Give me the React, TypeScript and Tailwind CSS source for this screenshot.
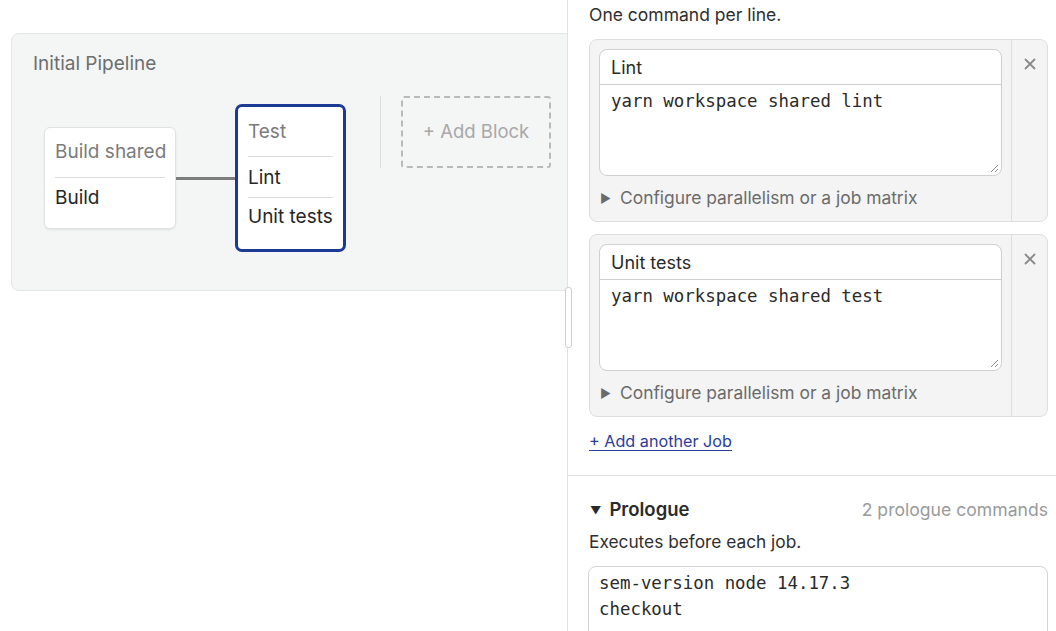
import React from "react";

const sans = { fontFamily: "Inter, 'Noto Sans', sans-serif" };
const mono = { fontFamily: "'DejaVu Sans Mono', 'Liberation Mono', monospace" };

function JobCard({ name, cmd }: { name: string; cmd: string }) {
  return (
    <div className="flex rounded-[8px] border border-[#dedede] bg-[#f4f4f4]">
      <div className="flex-1 pl-[9px] pr-[9px] pt-[9px]">
        <div className="rounded-[8px] border border-[#cfcfcf] bg-white overflow-hidden">
          <div className="h-[35px] flex items-center px-[11px] text-[18px] text-[#2a2a2a] border-b border-[#cfcfcf]">
            {name}
          </div>
          <div className="relative h-[90px] px-[11px] pt-[4px] text-[17.4px] text-[#2a2a2a] leading-[24px]" style={mono}>
            {cmd}
            <svg className="absolute right-[2px] bottom-[2px]" width="9" height="9" viewBox="0 0 9 9">
              <path d="M1 8 L8 1 M5 8 L8 5" stroke="#8a8a8a" strokeWidth="1" />
            </svg>
          </div>
        </div>
        <div className="flex items-center h-[45px] text-[17.4px] text-[#6b6b6b]">
          <span className="text-[12px] text-[#6b6b6b] ml-[1px] mr-[9px]">▶</span>
          Configure parallelism or a job matrix
        </div>
      </div>
      <div className="w-[36px] border-l border-[#dedede] flex justify-center pt-[18px]">
        <svg width="12" height="12" viewBox="0 0 12 12">
          <path d="M1.5 1.5 L10.5 10.5 M10.5 1.5 L1.5 10.5" stroke="#8a8a8a" strokeWidth="1.8" strokeLinecap="round" />
        </svg>
      </div>
    </div>
  );
}

export default function App() {
  return (
    <div className="relative w-[1056px] h-[631px] flex overflow-hidden bg-white" style={sans}>
      {/* Left pane */}
      <div className="w-[568px] h-full border-r border-[#e2e2e2] overflow-hidden shrink-0">
        <div className="ml-[11px] mt-[33px] w-[620px] h-[258px] rounded-[8px] border border-[#e5e6e6] bg-[#f4f5f5] pl-[21px] pt-[18px]">
          <div className="text-[19px] leading-[24px] text-[#6c6e6e]">Initial Pipeline</div>
          <div className="flex items-start mt-[20px] ml-[11px]">
            <div className="flex items-center mt-[8px]">
              <div className="w-[132px] h-[102px] rounded-[6px] bg-white border border-[#e1e1e1] shadow-[0_1px_2px_rgba(0,0,0,0.08)] px-[10px]">
                <div className="pt-[12px] pb-[13px] border-b border-[#dcdcdc] text-[19px] leading-[24px] text-[#7b7b7b] whitespace-nowrap">
                  Build shared
                </div>
                <div className="pt-[8px] text-[19px] leading-[24px] text-[#262626]">Build</div>
              </div>
              <div className="w-[59px] h-[3px] bg-[#7c7c7c]" />
              <div className="w-[111px] h-[148px] rounded-[7px] border-[3px] border-[#1b3a96] bg-white px-[10px]">
                <div className="pt-[13px] pb-[12px] border-b border-[#dcdcdc] text-[19px] leading-[24px] text-[#7b7b7b]">
                  Test
                </div>
                <div className="pt-[9px] pb-[7px] border-b border-[#dcdcdc] text-[19px] leading-[24px] text-[#262626]">
                  Lint
                </div>
                <div className="pt-[7px] text-[19px] leading-[24px] text-[#262626] whitespace-nowrap">Unit tests</div>
              </div>
            </div>
            <div className="ml-[34px] w-[1px] h-[72px] bg-[#dcdcdc]" />
            <div className="ml-[20px] w-[150px] h-[72px] border-2 border-dashed border-[#b9b9b9] rounded-[3px] flex items-center justify-center text-[18.5px] text-[#a8a8a8]">
              + Add Block
            </div>
          </div>
        </div>
      </div>
      <div className="absolute left-[565px] top-[287px] w-[7px] h-[61px] rounded-[3px] border border-[#cfcfcf] bg-white" />

      {/* Right pane */}
      <div className="flex-1 h-full overflow-hidden">
        <div className="pl-[21px] pr-[8px]">
          <div className="pt-[3px] text-[17.5px] leading-[24px] text-[#2e2e2e]">One command per line.</div>
          <div className="mt-[12px] flex flex-col gap-[12px]">
            <JobCard name="Lint" cmd="yarn workspace shared lint" />
            <JobCard name="Unit tests" cmd="yarn workspace shared test" />
          </div>
          <div className="mt-[12px] text-[16.2px] leading-[24px]">
            <span className="text-[#2b3c9c] underline underline-offset-[3px]">+ Add another Job</span>
          </div>
        </div>
        <div className="mt-[22px] border-t border-[#e2e2e2]" />
        <div className="pl-[21px] pr-[8px] pt-[21px]">
          <div className="flex items-center justify-between h-[26px]">
            <div className="flex items-center text-[18.5px] font-semibold text-[#2a2a2a]">
              <span className="text-[11px] ml-[1px] mr-[8px]">▼</span>Prologue
            </div>
            <div className="text-[17.6px] text-[#9a9a9a]">2 prologue commands</div>
          </div>
          <div className="mt-[7px] text-[17.3px] leading-[24px] text-[#2e2e2e]">Executes before each job.</div>
          <div className="mt-[12px] -ml-[1px] rounded-[8px] border border-[#d4d4d4] bg-white h-[100px] px-[10px] pt-[3px] text-[17.4px] leading-[26px] text-[#2a2a2a]" style={mono}>
            <div>sem-version node 14.17.3</div>
            <div>checkout</div>
          </div>
        </div>
      </div>
    </div>
  );
}
